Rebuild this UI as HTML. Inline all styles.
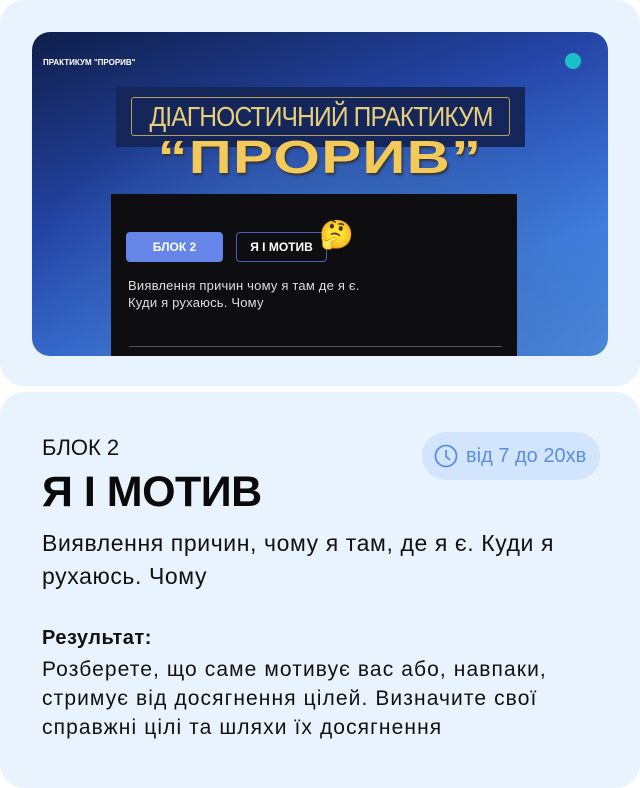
<!DOCTYPE html>
<html><head><meta charset="utf-8"><style>
*{margin:0;padding:0;box-sizing:border-box}
body{width:640px;height:788px;background:#fff;font-family:"Liberation Sans",sans-serif;position:relative;overflow:hidden}
.card{position:absolute;left:0;width:640px;background:#e9f3fe;border-radius:24px}
.img{position:absolute;left:32px;top:32px;width:576px;height:324px;border-radius:18px;overflow:hidden;
background:radial-gradient(ellipse 300px 200px at 300px 250px,#3a6cb0 0%,rgba(58,108,176,0) 100%),linear-gradient(160deg,#0f1e4a 0%,#2546a8 40%,#3f7de0 75%,#4a86d8 100%)}
.abs{position:absolute}
</style></head><body>
<div class="card" style="top:0;height:386px"></div>
<div class="card" style="top:392px;height:396px"></div>
<div class="img">
 <div class="abs" style="left:11px;top:26px;color:#fff;font-size:8px;font-weight:bold">ПРАКТИКУМ "ПРОРИВ"</div>
 <div class="abs" style="left:533px;top:21px;width:16px;height:16px;border-radius:50%;background:#19c0c8"></div>
 <div class="abs" style="left:84px;top:55px;width:409px;height:60px;background:#14265a"></div>
 <div class="abs" style="left:99px;top:65px;width:379px;height:39px;border:1px solid #b8a060;border-radius:3px;color:#e8cf7a;font-size:28px;line-height:37px;letter-spacing:-1px;white-space:nowrap;overflow:visible"><span style="position:absolute;left:50%;top:0;transform:translateX(-50%) scaleX(0.88)">ДІАГНОСТИЧНИЙ ПРАКТИКУМ</span></div>
 <div class="abs" style="left:0;width:576px;top:98px;text-align:center;color:#f3c95a;font-size:46px;font-weight:900;letter-spacing:1px;text-shadow:1px 2px 2px #333;white-space:nowrap"><span style="display:inline-block;transform:scaleX(1.3)">“ПРОРИВ”</span></div>
 <div class="abs" style="left:79px;top:162px;width:406px;height:170px;background:#0e0e10"></div>
 <div class="abs" style="left:94px;top:200px;width:97px;height:30px;background:#6585e8;border-radius:4px;color:#fff;font-size:12px;font-weight:bold;text-align:center;line-height:30px">БЛОК 2</div>
 <div class="abs" style="left:204px;top:200px;width:91px;height:30px;border:1px solid #4a5fc0;border-radius:4px;color:#fff;font-size:12px;font-weight:bold;text-align:center;line-height:28px">Я І МОТИВ</div>
 <div class="abs" style="left:287px;top:186px;font-size:28px">🤔</div>
 <div class="abs" style="left:96px;top:245px;color:#ddd;font-size:13px;line-height:17px;letter-spacing:0.2px">Виявлення причин чому я там де я є.<br>Куди я рухаюсь. Чому</div>
 <div class="abs" style="left:97px;top:314px;width:373px;height:1px;background:#555"></div>
</div>
<div class="abs" style="left:42px;top:435px;font-size:22px;color:#111">БЛОК 2</div>
<div class="abs" style="left:42px;top:468px;font-size:43px;font-weight:bold;color:#0a0a0a;letter-spacing:-0.5px">Я І МОТИВ</div>
<div class="abs" style="left:422px;top:432px;width:178px;height:48px;border-radius:24px;background:#d2e5fd;color:#5a8ee0;font-size:20px;line-height:48px;padding-left:44px">від 7 до 20хв
 <svg class="abs" style="left:12px;top:12px" width="24" height="24" viewBox="0 0 24 24" fill="none" stroke="#5a8ee0" stroke-width="1.8"><circle cx="12" cy="12" r="10.5"/><path d="M12 6v6.5l4 3.5"/></svg></div>
<div class="abs" style="left:42px;top:527px;width:560px;font-size:23px;line-height:33px;color:#111;letter-spacing:0.6px">Виявлення причин, чому я там, де я є. Куди я рухаюсь. Чому</div>
<div class="abs" style="left:42px;top:627px;font-size:20px;font-weight:bold;color:#111;letter-spacing:0.5px">Результат:</div>
<div class="abs" style="left:42px;top:655px;width:560px;font-size:21px;line-height:29px;color:#111;letter-spacing:1.1px">Розберете, що саме мотивує вас або, навпаки, стримує від досягнення цілей. Визначите свої справжні цілі та шляхи їх досягнення</div>
</body></html>
